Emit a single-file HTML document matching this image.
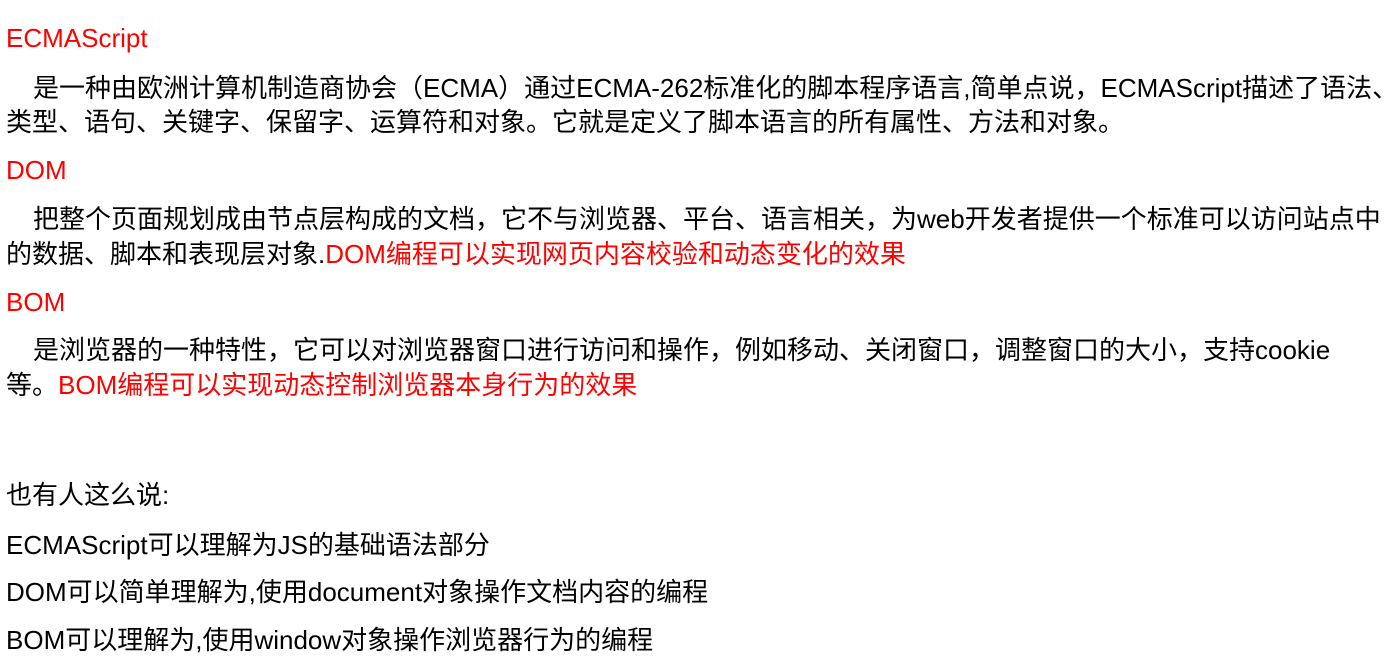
<!DOCTYPE html>
<html><head><meta charset="utf-8"><style>
body{margin:0;width:1398px;height:668px;background:#fff;overflow:hidden;font-family:"Liberation Sans","Noto Sans CJK SC",sans-serif;font-size:26px;color:#000}
.l{position:absolute;left:6px;white-space:nowrap;line-height:30px}
.r{color:#f00}
</style></head><body>
<div class="l r" style="top:23px">ECMAScript</div>
<div class="l" style="top:73px;left:33px">是一种由欧洲计算机制造商协会（ECMA）通过ECMA-262标准化的脚本程序语言,简单点说，ECMAScript描述了语法、</div>
<div class="l" style="top:107px">类型、语句、关键字、保留字、运算符和对象。它就是定义了脚本语言的所有属性、方法和对象。</div>
<div class="l r" style="top:155px">DOM</div>
<div class="l" style="top:204px;left:33px">把整个页面规划成由节点层构成的文档，它不与浏览器、平台、语言相关，为web开发者提供一个标准可以访问站点中</div>
<div class="l" style="top:239px">的数据、脚本和表现层对象.<span class="r">DOM编程可以实现网页内容校验和动态变化的效果</span></div>
<div class="l r" style="top:287px">BOM</div>
<div class="l" style="top:335px;left:33px">是浏览器的一种特性，它可以对浏览器窗口进行访问和操作，例如移动、关闭窗口，调整窗口的大小，支持cookie</div>
<div class="l" style="top:370px">等。<span class="r">BOM编程可以实现动态控制浏览器本身行为的效果</span></div>
<div class="l" style="top:480px">也有人这么说:</div>
<div class="l" style="top:530px">ECMAScript可以理解为JS的基础语法部分</div>
<div class="l" style="top:577px">DOM可以简单理解为,使用document对象操作文档内容的编程</div>
<div class="l" style="top:625px">BOM可以理解为,使用window对象操作浏览器行为的编程</div>
</body></html>
